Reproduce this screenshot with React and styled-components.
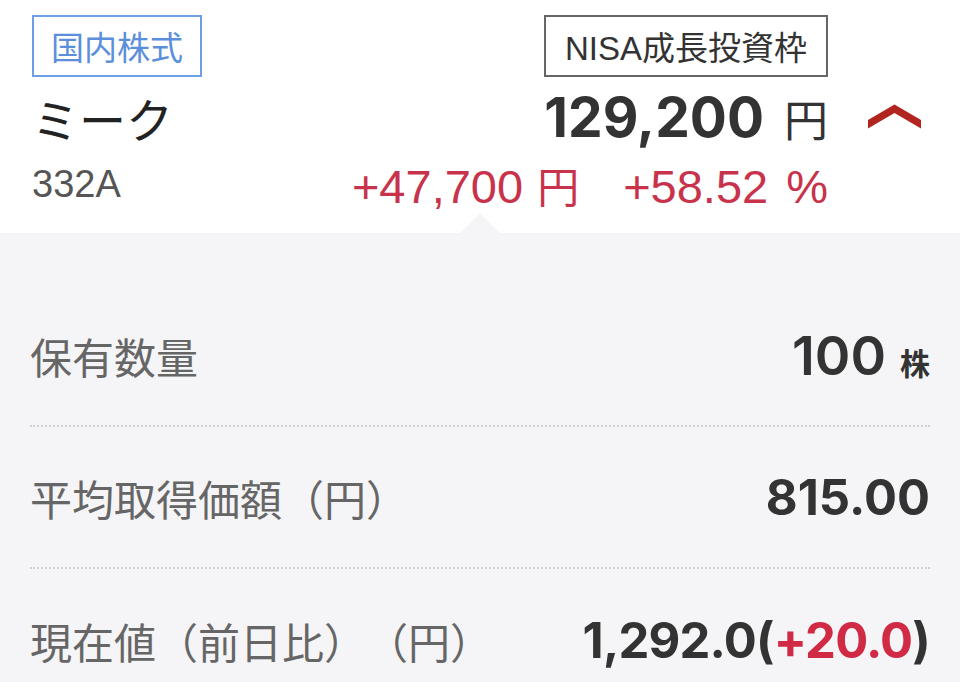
import React from "react";
import styled, { createGlobalStyle } from "styled-components";

const GlobalStyle = createGlobalStyle`
  html, body {
    margin: 0;
    padding: 0;
    background: #f5f5f7;
  }
  body {
    font-family: "Liberation Sans", "Noto Sans CJK JP", sans-serif;
    color: #333;
    text-spacing-trim: space-all;
  }
`;

const NUM_FONT = `"Inter", "Liberation Sans", "Noto Sans CJK JP", sans-serif`;

const Page = styled.div`
  width: 960px;
  height: 682px;
  overflow: hidden;
`;

const Header = styled.header`
  background: #fff;
  display: grid;
  grid-template-columns: 1fr auto 132px;
  grid-template-rows: 62px 80px 54px;
  padding: 15px 0 22px 32px;
`;

const Tag = styled.div`
  box-sizing: border-box;
  height: 62px;
  display: flex;
  align-items: center;
  padding: 0 ${(p) => (p.$blue ? 17 : 19)}px;
  border: 2px solid ${(p) => (p.$blue ? "#6c9fe4" : "#666")};
  color: ${(p) => (p.$blue ? "#5b8fdc" : "#333")};
  font-size: 33px;
  justify-self: ${(p) => (p.$right ? "end" : "start")};
`;

const Name = styled.div`
  align-self: center;
  font-size: 47px;
  color: #222;
  font-family: "Noto Sans CJK JP", sans-serif;
`;

const Code = styled.div`
  align-self: center;
  font-size: 38px;
  color: #555;
`;

const Price = styled.div`
  justify-self: end;
  align-self: center;
  display: flex;
  align-items: baseline;
  gap: 20px;
  color: #333;
`;

const PriceNum = styled.span`
  font-family: ${NUM_FONT};
  font-weight: 700;
  font-size: 55px;
`;

const Yen = styled.span`
  font-family: "Noto Sans CJK JP", sans-serif;
  font-size: ${(p) => p.$size || 44}px;
`;

const Change = styled.div`
  justify-self: end;
  align-self: center;
  display: flex;
  align-items: baseline;
  gap: 44px;
  color: #c8334b;
  font-size: 47px;
  font-family: "Liberation Sans", "Noto Sans CJK JP", sans-serif;
`;

const ChangeItem = styled.span`
  display: flex;
  align-items: baseline;
  gap: ${(p) => p.$gap || 14}px;
`;

const Chevron = styled.div`
  align-self: center;
  padding-left: 40px;
  display: flex;
`;

const Panel = styled.section`
  position: relative;
  background: #f5f5f7;
  padding: 52px 30px 0;

  &::before {
    content: "";
    position: absolute;
    top: -20px;
    left: 460px;
    border-left: 20px solid transparent;
    border-right: 20px solid transparent;
    border-bottom: 20px solid #f5f5f7;
  }
`;

const Row = styled.div`
  height: 142px;
  display: flex;
  align-items: center;
  justify-content: space-between;
  border-bottom: 2px dotted #d0d0d4;
  box-sizing: border-box;

  &:last-child {
    border-bottom: none;
  }
`;

const Label = styled.div`
  font-family: "Noto Sans CJK JP", sans-serif;
  font-size: 42px;
  color: #666;
  text-spacing-trim: space-all;
`;

const Value = styled.div`
  font-family: ${NUM_FONT};
  font-weight: ${(p) => p.$weight || 700};
  font-size: ${(p) => p.$size || 49}px;
  letter-spacing: ${(p) => p.$ls || 0}px;
  color: #333;
  display: flex;
  align-items: baseline;
  gap: 14px;
`;

const Unit = styled.span`
  font-family: "Noto Sans CJK JP", sans-serif;
  font-size: 30px;
  font-weight: 700;
`;

const Up = styled.span`
  color: #d12a45;
`;

const ChevronIcon = () => (
  <svg width="53" height="28" viewBox="0 0 53 28">
    <polygon points="0,17 26.5,1.5 53,17 53,25.5 26.5,10 0,25.5" fill="#b2251f" />
  </svg>
);

export default function App() {
  return (
    <Page>
      <GlobalStyle />
      <Header>
        <Tag $blue>国内株式</Tag>
        <Tag $right>NISA成長投資枠</Tag>
        <div />
        <Name>ミーク</Name>
        <Price>
          <PriceNum>129,200</PriceNum>
          <Yen>円</Yen>
        </Price>
        <Chevron>
          <ChevronIcon />
        </Chevron>
        <Code>332A</Code>
        <Change>
          <ChangeItem>
            <span>+47,700</span>
            <Yen $size={42}>円</Yen>
          </ChangeItem>
          <ChangeItem $gap={18}>
            <span>+58.52</span>
            <span>%</span>
          </ChangeItem>
        </Change>
        <div />
      </Header>
      <Panel>
        <Row>
          <Label>保有数量</Label>
          <Value $size={54} $weight={600}>
            <span>100</span>
            <Unit>株</Unit>
          </Value>
        </Row>
        <Row>
          <Label>平均取得価額（円）</Label>
          <Value>815.00</Value>
        </Row>
        <Row>
          <Label>現在値（前日比）（円）</Label>
          <Value $ls={-0.8}>
            <span>
              1,292.0(<Up>+20.0</Up>)
            </span>
          </Value>
        </Row>
      </Panel>
    </Page>
  );
}
